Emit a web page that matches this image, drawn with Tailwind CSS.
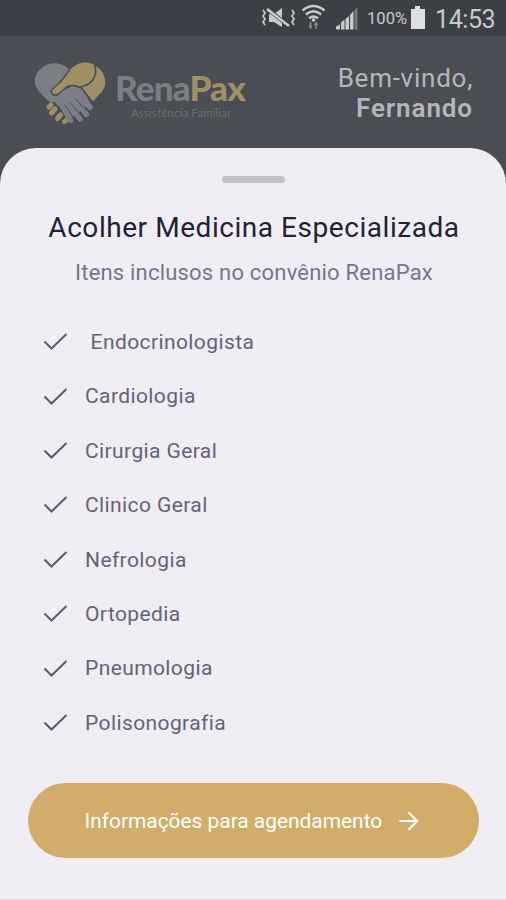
<!DOCTYPE html>
<html lang="pt-BR">
<head>
<meta charset="utf-8">
<title>RenaPax</title>
<script src="https://cdn.jsdelivr.net/npm/@tailwindcss/browser@4"></script>
</head>
<body class="w-[506px] h-[900px] overflow-hidden bg-[#4a4d54] font-['Roboto',sans-serif]">
<div class="flex flex-col h-[900px]">
  <div class="h-9 shrink-0 bg-[#3c3f45] flex items-center justify-end text-[#c9cacc]">
    <svg class="w-[96px] h-9 mr-[10px]" viewBox="261 0 96 36" fill="none">
      <path d="M268 14h5l8-6v19l-8-5h-5z" fill="#c9cacc"/>
      <path d="M265 8l23 18" stroke="#3c3f45" stroke-width="4"/>
      <path d="M266 9l22 17" stroke="#c9cacc" stroke-width="2.600"/>
      <path d="M262 10l2 3-2 3 2 3-2 3 2 3M291 10l2 3-2 3 2 3-2 3 2 3" stroke="#c9cacc" stroke-width="1.700"/>
      <path d="M301.500 10.500q11-9 22 0M304.800 14.500q7.700-6.500 15.400 0M308 18.300q4.500-3.600 9 0" stroke="#c9cacc" stroke-width="2.400"/>
      <circle cx="312.500" cy="20" r="1.800" fill="#c9cacc"/>
      <path d="M309.500 22v6m-1.500-2 1.500 2 1.500-2M315 29v-6m-1.500 2 1.500-2 1.500 2" stroke="#8b8d91" stroke-width="1.500"/>
      <path d="M335 29.500v-3l4-2v5zM340 29.500v-7l3.500-3v10zM344.500 29.500V19l3.500-3v13.500zM349 29.500V15l3.500-4v18.500z" fill="#c9cacc"/>
      <path d="M353.500 29.500V10.500l3-3v22z" fill="#76797e"/>
    </svg>
    <span class="text-[16.500px] leading-none mt-[2px] ml-[-1px] mr-[1px] tracking-[0.100px] w-[42px] whitespace-nowrap">100%</span>
    <svg class="w-[16px] h-9 ml-0 mr-[6px]" viewBox="0 0 16 36"><path d="M5 6h5v3h5v20H1V9h4z" fill="#dedfe0"/></svg>
    <span class="text-[25px] leading-none mt-[3px] ml-[3px] w-[71px] whitespace-nowrap tracking-[-0.400px]">14:53</span>
  </div>

  <div class="h-28 shrink-0 flex justify-between">
    <div class="flex pl-7 pt-[22px]">
      <svg class="w-[84px] h-[70px]" viewBox="-0.5 0 84 70" fill="none" stroke-linecap="round" stroke-linejoin="round">
        <path d="M20.500 49l2-2M23 55l3.500-4M29 60.500l3-3.500M36 63.500l1.500-1" stroke="#a09066" stroke-width="5"/>
        <path d="M41 12C34 4 22 3 14 9C6 15 4 24 9 31C13 37 18 41 22 45C26 43 28 45 29 48C33 47 35 50 35 54C39 54 40 57 40 60L43 62L33 35L44 28L54 31L64 49L56 42L44 34L30 38Z" fill="#7b7f85"/>
        <path d="M24 38L44 28L53 31L61 45L53 52L44 59L34 53Z" fill="#7b7f85"/>
        <path d="M32 45L42 62.500M38 43L51.500 61M44 39L58 56.500M49 34L61.500 49.500" stroke="#7b7f85" stroke-width="5.400"/>
        <path d="M36.500 47L45.500 60M42 45L53 58M47 41L57.500 52.500" stroke="#4a4d54" stroke-width="1"/>
        <path d="M41 12C49 4 58 2 66 7C76 13 80 24 74 33L64 44L53 30C47 27 42 27 38 29L30 36C25 39 21 35 24 31L32 24Z" fill="#a09066"/>
        <path d="M64 44L53 30C47 27 42 27 38 29L30 36C25 39 21 35 24 31L32 24L41 12" stroke="#4a4d54" stroke-width="1.500"/>
        <path d="M66 7C69 15 66 23 58 27L52 29" stroke="#4a4d54" stroke-width="1.600"/>
      </svg>
      <div class="ml-[3px] pt-[12px] flex flex-col whitespace-nowrap">
        <div class="text-[35px] leading-[34px] font-['Lato',sans-serif] font-black tracking-[-0.800px] text-[#7b7f85]">Rena<span class="text-[#a09066]">Pax</span></div>
        <div class="ml-[16px] mt-[2px] text-[11px] leading-[14px] font-['Lato',sans-serif] tracking-[0.350px] text-[#6d7075]">Assistência Familiar</div>
      </div>
    </div>
    <div class="pr-[33px] pt-[27px] text-right text-[26px] leading-[30px] text-[#b5b6b9] whitespace-nowrap">
      <div class="tracking-[0.750px]">Bem-vindo,</div>
      <div class="font-semibold text-[26px] tracking-[0.900px]">Fernando</div>
    </div>
  </div>

  <div class="h-[752px] shrink-0 bg-[#f0edf4] rounded-t-[36px] flex flex-col items-center border-b border-[#d8d7df]">
    <div class="mt-[28px] w-[63px] h-[7px] shrink-0 rounded-full bg-[#c4c3c7]"></div>
    <h1 class="mt-[28px] text-[28px] leading-[34px] tracking-[0.550px] text-[#222139] whitespace-nowrap pl-[2px]">Acolher Medicina Especializada</h1>
    <p class="mt-[15px] text-[22px] leading-[26px] tracking-[0.200px] text-[#77768e] whitespace-nowrap pl-[2px]">Itens inclusos no convênio RenaPax</p>
    <ul id="items" class="mt-[29px] self-stretch pl-[43px] text-[21px] tracking-[0.400px] text-[#64637a]"></ul>
    <button class="mt-[33px] w-[451px] h-[75px] shrink-0 rounded-full bg-[#d2ad6a] flex items-center pl-[57px] text-white text-[20.900px] whitespace-nowrap">
      <span class="w-[299px] text-left pt-[2px]">Informações para agendamento</span>
      <svg class="w-[20px] h-[20px] ml-[15px]" viewBox="0 0 20 20" fill="none" stroke="#fff" stroke-width="2.200"><path d="M0.500 10H18M9.500 1.200L18.300 10L9.500 18.800"/></svg>
    </button>
  </div>
</div>
<script>
const items = ["\u00a0Endocrinologista","Cardiologia","Cirurgia Geral","Clinico Geral","Nefrologia","Ortopedia","Pneumologia","Polisonografia"];
document.getElementById("items").innerHTML = items.map(t => `<li class="h-[54.400px] flex items-center"><svg class="w-[25px] h-[20px] mr-[17px]" viewBox="0 0.5 25 20" fill="none" stroke="#5c5b70" stroke-width="2"><path d="M1.500 10L8.500 17L23.500 2.500"/></svg><span class="whitespace-nowrap pt-[1px]">${t}</span></li>`).join("");
</script>
</body>
</html>
